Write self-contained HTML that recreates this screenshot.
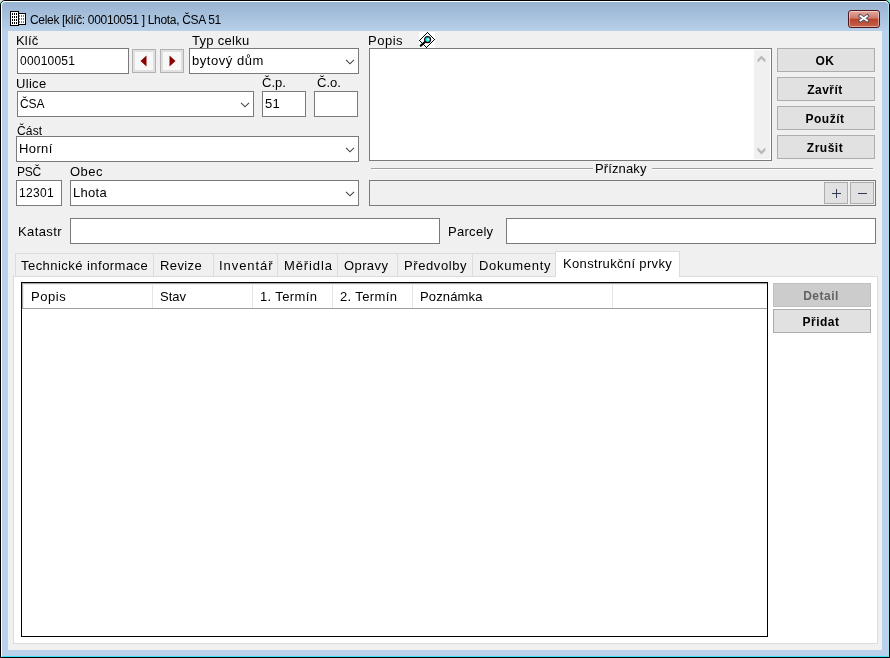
<!DOCTYPE html>
<html>
<head>
<meta charset="utf-8">
<title>Celek</title>
<style>
html,body{margin:0;padding:0;}
body{width:890px;height:658px;overflow:hidden;background:#b9d1ea;font-family:"Liberation Sans",sans-serif;font-size:13px;color:#000;position:relative;}
*{box-sizing:border-box;}
.abs{position:absolute;}
#win{position:absolute;left:0;top:0;width:890px;height:658px;background:#b9d1ea;border:1px solid #000;border-radius:5px 5px 0 0;overflow:hidden;}
#winin{position:absolute;left:0;top:0;width:888px;height:656px;border:1px solid #fff;border-right-color:#a6dcf6;border-bottom-color:#36e0f6;border-radius:4px 4px 0 0;}
#titlegrad{position:absolute;left:1px;top:1px;width:886px;height:30px;background:linear-gradient(#98b3d1 0%,#a6c0dc 45%,#b9d1ea 100%);border-radius:4px 4px 0 0;}
#client{position:absolute;left:8px;top:31px;width:874px;height:619px;background:#f0f0f0;}
.t,.btn{will-change:transform;}
.t{position:absolute;white-space:nowrap;line-height:16px;height:16px;font-size:13px;letter-spacing:0.55px;}
.in{position:absolute;background:#fff;border:1px solid #7a7a7a;}
.btn{position:absolute;background:#e1e1e1;border:1px solid #adadad;text-align:center;font-weight:bold;font-size:12px;letter-spacing:0.5px;line-height:22px;padding:1px 2px 0 0;}
.chev{position:absolute;width:10px;height:6px;}
.tab{position:absolute;top:253px;height:24px;background:#f0f0f0;border:1px solid #dcdcdc;border-bottom:none;}
.hsep{position:absolute;top:285px;width:1px;height:23px;background:#e5e5e5;}
</style>
</head>
<body>
<div class="abs" style="left:0;top:0;width:5px;height:5px;background:#e4e4e4"></div><div class="abs" style="left:0;top:2px;width:1px;height:2px;background:#6ff0cf"></div><div class="abs" style="left:885px;top:0;width:5px;height:5px;background:#7df5d2"></div>
<div id="win">
<div id="titlegrad"></div>
<div id="winin"></div>
</div>
<div id="client"></div>

<!-- title icon -->
<svg class="abs" style="left:10px;top:11px" width="17" height="16" viewBox="0 0 17 16" shape-rendering="crispEdges">
<rect x="8" y="2" width="8" height="12" fill="#fff" stroke="none"/>
<path d="M8.5 2.5H15.5V13.5H8.5Z" fill="none" stroke="#000" stroke-width="1"/>
<rect x="0.5" y="0.5" width="8" height="14" fill="#fff" stroke="#000" stroke-width="1"/>
<g fill="#000">
<rect x="2" y="2" width="1" height="2"/><rect x="4" y="2" width="1" height="2"/><rect x="6" y="2" width="1" height="2"/>
<rect x="2" y="5" width="1" height="2"/><rect x="4" y="5" width="1" height="2"/><rect x="6" y="5" width="1" height="2"/>
<rect x="2" y="8" width="1" height="2"/><rect x="4" y="8" width="1" height="2"/><rect x="6" y="8" width="1" height="2"/>
<rect x="2" y="11" width="1" height="2"/><rect x="4" y="11" width="1" height="2"/><rect x="6" y="11" width="1" height="2"/>
</g>
<g fill="#808080">
<rect x="9" y="4" width="1" height="2"/><rect x="11" y="4" width="1" height="2"/><rect x="13" y="4" width="1" height="2"/>
<rect x="9" y="7" width="1" height="2"/><rect x="11" y="7" width="1" height="2"/><rect x="13" y="7" width="1" height="2"/>
<rect x="9" y="10" width="1" height="2"/><rect x="11" y="10" width="1" height="2"/><rect x="13" y="10" width="1" height="2"/>
</g>
</svg>
<div class="t" id="title" style="left:29.5px;top:12px;font-size:12px;letter-spacing:-0.32px">Celek [klíč: 00010051 ] Lhota, ČSA 51</div>

<!-- close button -->
<div class="abs" style="left:848px;top:10px;width:32px;height:18px;border:1px solid #50161f;border-radius:3px;background:linear-gradient(#e2a99d 0%,#d0796b 45%,#b8432c 50%,#c5614a 100%);box-shadow:inset 0 0 0 1px rgba(255,255,255,0.45);"></div>
<svg class="abs" style="left:857px;top:13px" width="14" height="12" viewBox="0 0 14 12">
<path d="M3.3 2.9 L10.2 7.6 M10.2 2.9 L3.3 7.6" stroke="#4b4f5c" stroke-width="3.5" stroke-linecap="square"/>
<path d="M3.5 3 L10 7.5 M10 3 L3.5 7.5" stroke="#fff" stroke-width="1.9" stroke-linecap="square"/>
</svg>

<!-- Row 1 -->
<div class="t" id="l_klic" style="left:16px;top:33px;font-size:13px;letter-spacing:0.17px">Klíč</div>
<div class="in" style="left:17px;top:48px;width:112px;height:26px"></div>
<div class="t" id="v_klic" style="left:20px;top:53px;font-size:12px;letter-spacing:0.21px">00010051</div>

<div class="abs" id="bprev" style="left:132px;top:49px;width:24px;height:24px;background:#f8f8f8;border:1px solid #b2b2b2;box-shadow:inset 0 0 0 2px #e0e0e0"></div>
<svg class="abs" style="left:139.6px;top:55px" width="7" height="12" viewBox="0 0 7 12"><path d="M6.5 0.5 L6.5 11.5 L0.5 6 Z" fill="#8b0000"/></svg>
<div class="abs" id="bnext" style="left:160px;top:49px;width:24px;height:24px;background:#f8f8f8;border:1px solid #b2b2b2;box-shadow:inset 0 0 0 2px #e0e0e0"></div>
<svg class="abs" style="left:169px;top:55px" width="7" height="12" viewBox="0 0 7 12"><path d="M0.5 0.5 L0.5 11.5 L6.5 6 Z" fill="#8b0000"/></svg>

<div class="t" id="l_typ" style="left:192px;top:33px;font-size:13px;letter-spacing:0.28px">Typ celku</div>
<div class="in" style="left:189px;top:48px;width:170px;height:26px"></div>
<div class="t" id="v_typ" style="left:192px;top:53px;font-size:13px;letter-spacing:0.55px">bytový dům</div>
<svg class="chev" style="left:345px;top:59px" viewBox="0 0 10 6"><path d="M1 0.8 L5 4.8 L9 0.8" fill="none" stroke="#444" stroke-width="1.1"/></svg>

<div class="t" id="l_popis" style="left:367.8px;top:33px;font-size:13px;letter-spacing:0.5px">Popis</div>
<!-- magnifier icon -->
<svg class="abs" style="left:419px;top:32px" width="16" height="16" viewBox="0 0 16 16">
<rect width="16" height="16" fill="#fff"/>
<path d="M8.5 0.5 L15.5 7.5 L7.5 15.5 L0.5 8.5 Z" fill="none" stroke="#000" stroke-width="1" shape-rendering="crispEdges"/>
<path d="M6 10 L1.8 13.7" stroke="#000" stroke-width="2.2" stroke-linecap="round"/>
<circle cx="8.6" cy="7.6" r="3" fill="#00f0f0" stroke="#1c0000" stroke-width="1.2"/>
<circle cx="9" cy="7.6" r="1.1" fill="#e8ffff"/>
</svg>
<div class="in" style="left:369px;top:48px;width:403px;height:113px"></div>
<div class="abs" style="left:754px;top:50px;width:16px;height:109px;background:#f0f0f0"></div>
<svg class="abs" style="left:754px;top:50px" width="16" height="109" viewBox="754 50 16 109"><path d="M761.5 55.6 L765.4 59.5 L765.4 62.2 L764.9 62.2 L761.5 58.8 L758.1 62.2 L757.6 62.2 L757.6 59.5 Z" fill="#b8b8b8"/><path d="M761.5 154.4 L765.4 150.5 L765.4 147.8 L764.9 147.8 L761.5 151.2 L758.1 147.8 L757.6 147.8 L757.6 150.5 Z" fill="#b8b8b8"/></svg>

<div class="btn" id="b_ok" style="left:777px;top:48px;width:98px;height:24px">OK</div>
<div class="btn" id="b_zavrit" style="left:777px;top:77px;width:98px;height:24px">Zavřít</div>
<div class="btn" id="b_pouzit" style="left:777px;top:106px;width:98px;height:24px">Použít</div>
<div class="btn" id="b_zrusit" style="left:777px;top:135px;width:98px;height:24px">Zrušit</div>

<!-- Row 2 -->
<div class="t" id="l_ulice" style="left:16px;top:76px;font-size:13px;letter-spacing:0.31px">Ulice</div>
<div class="in" style="left:17px;top:91px;width:237px;height:26px"></div>
<div class="t" id="v_ulice" style="left:19.5px;top:96px;font-size:12px;letter-spacing:-0.12px">ČSA</div>
<svg class="chev" style="left:240px;top:102px" viewBox="0 0 10 6"><path d="M1 0.8 L5 4.8 L9 0.8" fill="none" stroke="#444" stroke-width="1.1"/></svg>
<div class="t" id="l_cp" style="left:261.5px;top:75px;font-size:13px;letter-spacing:0px">Č.p.</div>
<div class="in" style="left:262px;top:91px;width:44px;height:26px"></div>
<div class="t" id="v_cp" style="left:264.6px;top:96px;font-size:13px;letter-spacing:0.2px">51</div>
<div class="t" id="l_co" style="left:316.5px;top:75px;font-size:13px;letter-spacing:0px">Č.o.</div>
<div class="in" style="left:314px;top:91px;width:44px;height:26px"></div>

<!-- Row 3 -->
<div class="t" id="l_cast" style="left:16.5px;top:123px;font-size:12px;letter-spacing:0.17px">Část</div>
<div class="in" style="left:16px;top:136px;width:343px;height:26px"></div>
<div class="t" id="v_cast" style="left:18.5px;top:141px;font-size:13px;letter-spacing:0.38px">Horní</div>
<svg class="chev" style="left:345px;top:147px" viewBox="0 0 10 6"><path d="M1 0.8 L5 4.8 L9 0.8" fill="none" stroke="#444" stroke-width="1.1"/></svg>

<!-- Row 4 -->
<div class="t" id="l_psc" style="left:16.5px;top:164px;font-size:12px;letter-spacing:-0.25px">PSČ</div>
<div class="in" style="left:16px;top:180px;width:46px;height:26px"></div>
<div class="t" id="v_psc" style="left:18.5px;top:185px;font-size:12px;letter-spacing:0.3px">12301</div>
<div class="t" id="l_obec" style="left:70px;top:164px;font-size:13px;letter-spacing:0.5px">Obec</div>
<div class="in" style="left:70px;top:180px;width:289px;height:26px"></div>
<div class="t" id="v_obec" style="left:72.5px;top:185px;font-size:13px;letter-spacing:0.31px">Lhota</div>
<svg class="chev" style="left:345px;top:191px" viewBox="0 0 10 6"><path d="M1 0.8 L5 4.8 L9 0.8" fill="none" stroke="#444" stroke-width="1.1"/></svg>

<!-- Priznaky -->
<div class="abs" style="left:371px;top:168px;width:502px;height:1px;background:#a0a0a0"></div>
<div class="abs" style="left:372px;top:169px;width:502px;height:1px;background:#fff"></div>
<div class="t" id="l_priz" style="left:593px;top:161px;background:#f0f0f0;padding:0 5px 0 2px;font-size:13px;letter-spacing:0.12px">Příznaky</div>
<div class="in" style="left:369px;top:180px;width:507px;height:26px;background:#f0f0f0"></div>
<div class="btn" style="left:824px;top:182px;width:24px;height:22px"></div>
<div class="btn" style="left:850px;top:182px;width:24px;height:22px"></div>
<div class="abs" style="left:832px;top:193px;width:9px;height:1px;background:#2f3b52"></div>
<div class="abs" style="left:836px;top:189px;width:1px;height:9px;background:#2f3b52"></div>
<div class="abs" style="left:858px;top:193px;width:9px;height:1px;background:#2f3b52"></div>

<!-- Katastr / Parcely -->
<div class="t" id="l_kat" style="left:18px;top:224px;font-size:13px;letter-spacing:0.38px">Katastr</div>
<div class="in" style="left:70px;top:218px;width:370px;height:26px"></div>
<div class="t" id="l_par" style="left:447.8px;top:224px;font-size:13px;letter-spacing:0.29px">Parcely</div>
<div class="in" style="left:506px;top:218px;width:370px;height:26px"></div>

<!-- Tabs -->
<div class="tab" style="left:15px;width:139px"></div>
<div class="tab" style="left:153px;width:61px"></div>
<div class="tab" style="left:213px;width:65px"></div>
<div class="tab" style="left:277px;width:61px"></div>
<div class="tab" style="left:337px;width:61px"></div>
<div class="tab" style="left:397px;width:76px"></div>
<div class="tab" style="left:472px;width:84px"></div>
<div class="abs" id="page" style="left:13px;top:276px;width:865px;height:368px;background:#fff;border:1px solid #dcdcdc"></div>
<div class="tab" style="left:555px;top:251px;width:125px;height:26px;background:#fff"></div>
<div class="t" id="tb1" style="left:21.2px;top:258px;font-size:13px;letter-spacing:0.46px">Technické informace</div>
<div class="t" id="tb2" style="left:159.8px;top:258px;font-size:13px;letter-spacing:0.4px">Revize</div>
<div class="t" id="tb3" style="left:219px;top:258px;font-size:13px;letter-spacing:0.93px">Inventář</div>
<div class="t" id="tb4" style="left:283.5px;top:258px;font-size:13px;letter-spacing:0.88px">Měřidla</div>
<div class="t" id="tb5" style="left:343.5px;top:258px;font-size:13px;letter-spacing:0.4px">Opravy</div>
<div class="t" id="tb6" style="left:403.5px;top:258px;font-size:13px;letter-spacing:0.59px">Předvolby</div>
<div class="t" id="tb7" style="left:478.5px;top:258px;font-size:13px;letter-spacing:0.72px">Dokumenty</div>
<div class="t" id="tb8" style="left:563px;top:256px;font-size:13px;letter-spacing:0.34px">Konstrukční prvky</div>

<!-- List -->
<div class="abs" id="list" style="left:21px;top:282px;width:747px;height:355px;background:#fff;border:1px solid #000"></div>
<div class="abs" style="left:22px;top:283px;width:745px;height:25px;background:#fff;box-shadow:inset 1px 1px 0 #a6a6a6,inset 2px 2px 0 #efefef"></div>
<div class="abs" style="left:22px;top:308px;width:745px;height:1px;background:#a0a0a0"></div>
<div class="hsep" style="left:152px"></div>
<div class="hsep" style="left:252px"></div>
<div class="hsep" style="left:332px"></div>
<div class="hsep" style="left:412px"></div>
<div class="hsep" style="left:612px"></div>
<div class="t" id="h1" style="left:31px;top:289px;font-size:13px;letter-spacing:0.56px">Popis</div>
<div class="t" id="h2" style="left:159.8px;top:289px;font-size:13px;letter-spacing:0px">Stav</div>
<div class="t" id="h3" style="left:259.8px;top:289px;font-size:13px;letter-spacing:0.38px">1. Termín</div>
<div class="t" id="h4" style="left:340px;top:289px;font-size:13px;letter-spacing:0.38px">2. Termín</div>
<div class="t" id="h5" style="left:419.5px;top:289px;font-size:13px;letter-spacing:0.14px">Poznámka</div>

<div class="btn" id="b_detail" style="left:773px;top:283px;width:98px;height:24px;background:#cccccc;border-color:#bfbfbf;color:#636363">Detail</div>
<div class="btn" id="b_pridat" style="left:773px;top:309px;width:98px;height:24px">Přidat</div>
</body>
</html>
